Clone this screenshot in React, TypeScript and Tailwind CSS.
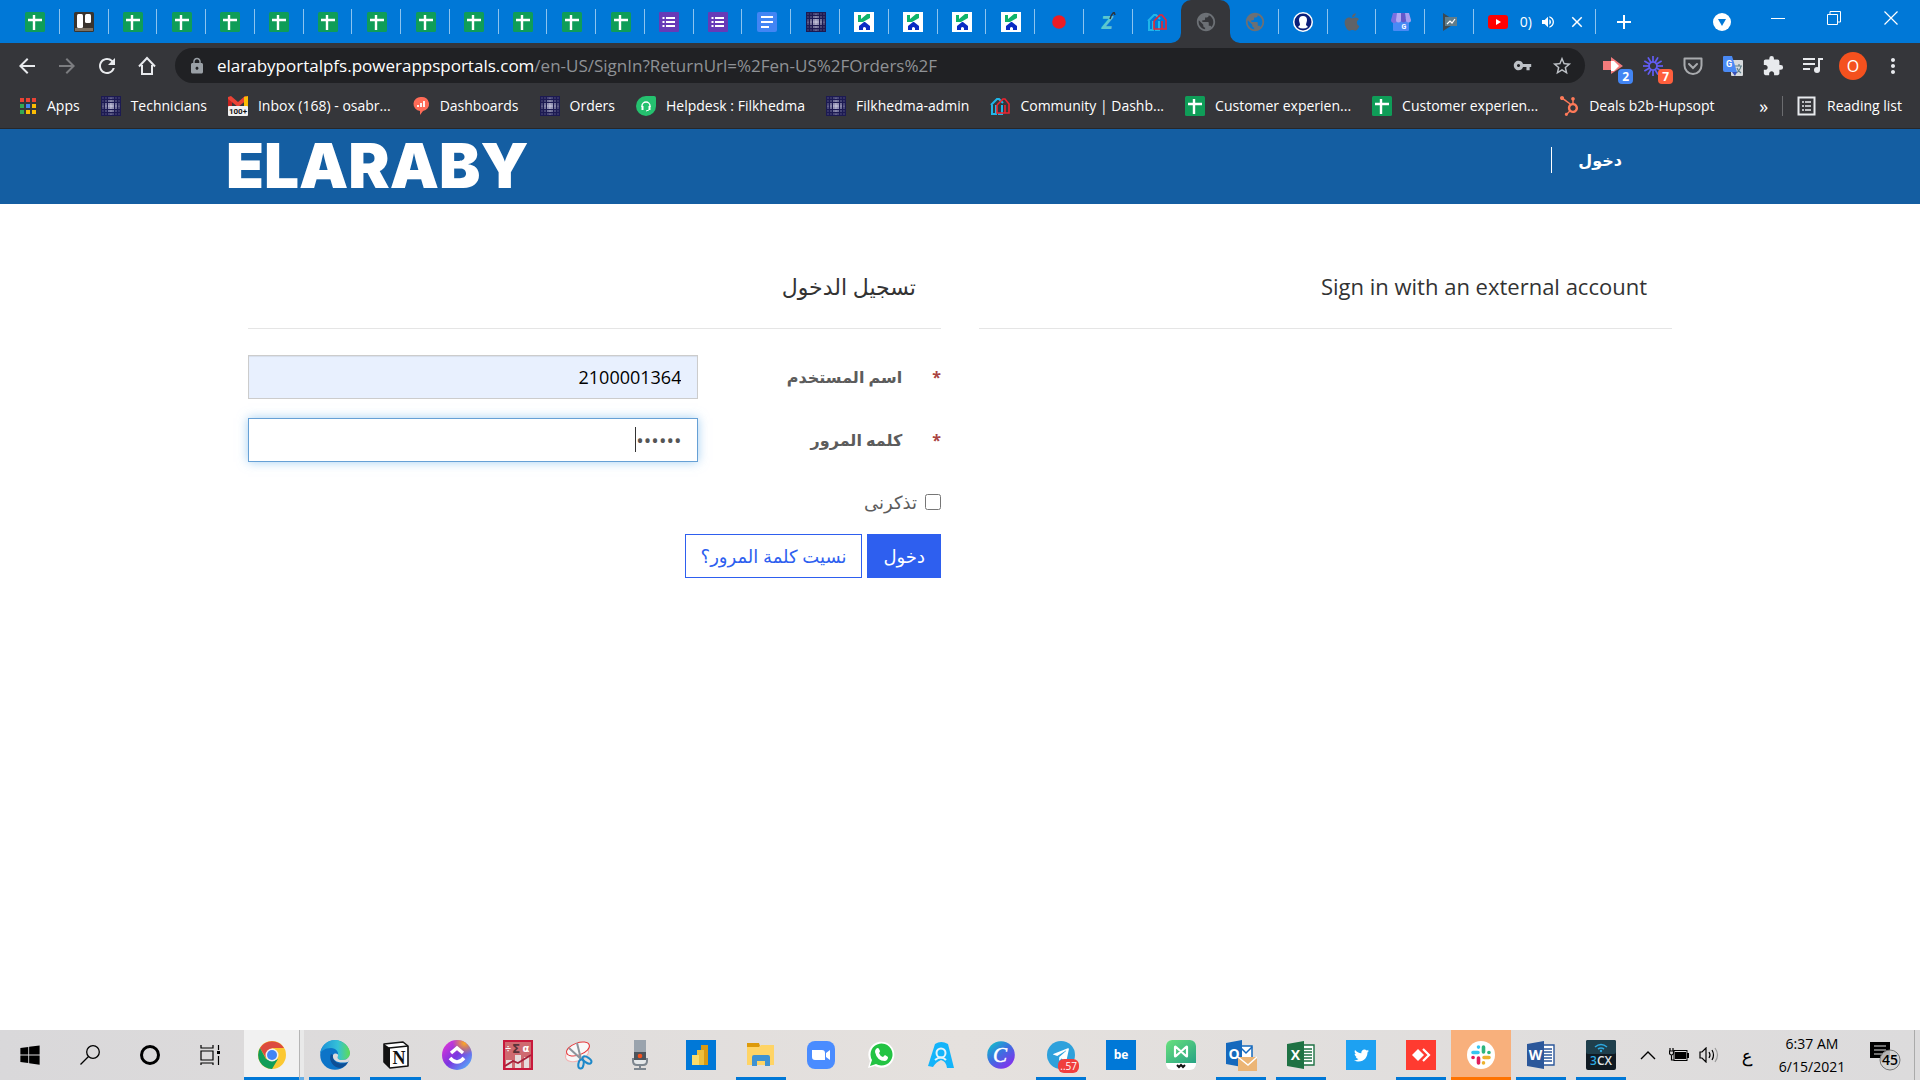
import type { ReactNode } from "react";
import { FaApple, FaHubspot, FaTelegramPlane, FaTwitter, FaWindows } from "react-icons/fa";
import {
  MdAdd,
  MdArrowBack,
  MdArrowForward,
  MdClose,
  MdExtension,
  MdLock,
  MdMoreVert,
  MdPublic,
  MdRefresh,
  MdStarBorder,
  MdVolumeUp,
  MdVpnKey,
} from "react-icons/md";

/* ---------- 20px favicons ---------- */

function SheetsIcon() {
  return (
    <svg viewBox="0 0 20 20" className="size-5">
      <rect width="20" height="20" rx="1.5" fill="#0f9d58" />
      <path d="M9 3v15M3 8h14" stroke="#fff" strokeWidth="2.4" />
    </svg>
  );
}

function BoardIcon() {
  return (
    <svg viewBox="0 0 20 20" className="size-5">
      <rect width="20" height="20" rx="1.5" fill="#3a342e" />
      <path d="M1 16h18v3H1z" fill="#7b7163" />
      <rect x="3" y="2" width="6" height="14" rx="1.5" fill="#fff" />
      <rect x="11" y="2" width="6" height="9" rx="1.5" fill="#fff" />
    </svg>
  );
}

function FormsIcon() {
  return (
    <svg viewBox="0 0 20 20" className="size-5">
      <rect width="20" height="20" rx="1" fill="#673ab7" />
      <path d="M7 6h9M7 10h9M7 14h9" stroke="#fff" strokeWidth="2" />
      <path d="M3.5 6h2M3.5 10h2M3.5 14h2" stroke="#fff" strokeWidth="2" />
    </svg>
  );
}

function DocsIcon() {
  return (
    <svg viewBox="0 0 20 20" className="size-5">
      <rect width="20" height="20" rx="2" fill="#4285f4" />
      <path d="M4 5h12M4 10h12M4 15h8" stroke="#fff" strokeWidth="2" />
    </svg>
  );
}

const dots = [-8, -5, -2, 0, 2, 5, 8];

function GridDotsIcon() {
  return (
    <svg viewBox="-10 -10 20 20" className="size-5">
      <rect x="-10" y="-10" width="20" height="20" fill="#1c1a52" />
      {dots.map((x) =>
        dots.map((y) => {
          const far = Math.abs(x) + Math.abs(y);
          return (
            <circle
              key={`${x},${y}`}
              cx={x}
              cy={y}
              r={Math.max(0.7, 1.1 - far * 0.03)}
              fill="#e4e3f4"
              opacity={Math.max(0.35, 1 - far * 0.05)}
            />
          );
        })
      )}
    </svg>
  );
}

function KhedmaIcon() {
  return (
    <svg viewBox="0 0 20 20" className="size-5">
      <rect width="20" height="20" fill="#fff" />
      <path d="M4 3h3v4l6-5h3v4l-7 4H4z" fill="#0fb36b" />
      <path d="M5 18v-4l5-4h1l5 4v4h-4v-2q-2-2-3 0v2z" fill="#0a2bc4" />
    </svg>
  );
}

function RecordIcon() {
  return (
    <svg viewBox="0 0 20 20" className="size-5">
      <circle cx="10" cy="10" r="6.8" fill="#ec1c24" />
    </svg>
  );
}

function TealTagIcon() {
  return (
    <svg viewBox="0 0 20 20" className="size-5">
      <text x="9" y="17" textAnchor="middle" fontSize="17" fontWeight="900" fontStyle="italic" fontFamily="Inter, sans-serif" fill="#5cc6cf">
        Z
      </text>
      <path d="M12 7q1-4 4-7l1 3" stroke="#2b3440" strokeWidth="1.5" fill="none" />
    </svg>
  );
}

function HousesIcon() {
  return (
    <svg viewBox="0 0 20 20" className="size-5" fill="none" strokeWidth="2">
      <path d="M1 9l6-6h2l4 4M2 9v9h4V9M12 9v9H8" stroke="#1fb6ea" />
      <path d="M7 9l6-6h2l4 5v9h-2M7 9v8h12M15 9v8" stroke="#ee2430" strokeWidth="1.6" />
    </svg>
  );
}

function GlobeIcon() {
  return <MdPublic className="size-[22px] text-[#6c7075]" />;
}

function PersonIcon() {
  return (
    <svg viewBox="0 0 20 20" className="size-5">
      <circle cx="10" cy="10" r="10" fill="#fff" />
      <circle cx="10" cy="10" r="8.5" fill="#0b1f7a" />
      <path d="M6 8a4 4 0 018 0c0 2-1 3-1 5l2 2q-5 3-10 0l2-2c0-2-1-3-1-5z" fill="#fff" />
    </svg>
  );
}

function StoreIcon() {
  return (
    <svg viewBox="0 0 20 20" className="size-5">
      <rect x="2" y="6" width="16" height="13" rx="1" fill="#4989f5" />
      <path d="M2 1h4v7a3 3 0 01-6 0z" fill="#7a6fe0" />
      <path d="M6 1h4v7a2 2 0 01-5 0z" fill="#b3a8f2" />
      <path d="M10 1h4l1 7a2 2 0 01-5 0z" fill="#6358c9" />
      <path d="M14 1h4l2 7a2 2 0 01-5 0z" fill="#a79df0" />
      <text x="13" y="17" textAnchor="middle" fontSize="7" fontWeight="700" fontFamily="Roboto, sans-serif" fill="#fff">
        G
      </text>
    </svg>
  );
}

function PlayConsoleIcon() {
  return (
    <svg viewBox="0 0 20 20" className="size-5">
      <path d="M3 1l14 9-14 9z" fill="#3d4a52" />
      <path d="M5 5h12v9H5z" fill="#607d8b" />
      <path d="M7 12l3-3 2 2 3-4" stroke="#fff" strokeWidth="1.2" fill="none" />
    </svg>
  );
}

function YoutubeIcon() {
  return (
    <svg viewBox="0 0 20 20" className="size-5">
      <rect y="3" width="20" height="14" rx="3" fill="#f00" />
      <path d="M8 7l5 3-5 3z" fill="#fff" />
    </svg>
  );
}

function AppsIcon() {
  const colors = ["#ea4335", "#ea4335", "#ea4335", "#34a853", "#4285f4", "#fbbc04", "#34a853", "#fbbc04", "#fbbc04"];
  return (
    <svg viewBox="0 0 18 18" className="size-[18px]">
      {colors.map((c, i) => (
        <rect key={i} x={1 + (i % 3) * 6} y={1 + Math.floor(i / 3) * 6} width="4" height="4" fill={c} />
      ))}
    </svg>
  );
}

function GmailIcon() {
  return (
    <svg viewBox="0 0 20 20" className="size-5">
      <path d="M0 2h4v9H0z" fill="#c5221f" />
      <path d="M16 2h4v9h-4z" fill="#fbbc04" />
      <path d="M0 1l3-1 7 6 7-6 3 1v2l-10 8L0 3z" fill="#ea4335" />
      <path d="M16 1l4-1v4l-4 3z" fill="#fbbc04" />
      <rect y="10" width="20" height="10" rx="1" fill="#f1f1f1" />
      <text x="10" y="18" textAnchor="middle" fontSize="8" fontWeight="700" fontFamily="Roboto, sans-serif" fill="#111">
        100+
      </text>
    </svg>
  );
}

function DashIcon() {
  return (
    <svg viewBox="0 0 18 20" className="h-5 w-[18px]">
      <path d="M9 1a7 7 0 012 14l-3 4v-4A7 7 0 019 1z" fill="#ff6b57" />
      <path d="M6 11V9M9 11V7M12 11V5" stroke="#fff" strokeWidth="1.8" />
    </svg>
  );
}

function HelpdeskIcon() {
  return (
    <svg viewBox="0 0 20 20" className="size-5">
      <path d="M10 0h8a2 2 0 012 2v8A10 10 0 1110 0z" fill="#25c16f" />
      <path d="M6 11v-1a4 4 0 018 0v1" stroke="#fff" strokeWidth="1.4" fill="none" />
      <path d="M6.5 10v4M13.5 10v4" stroke="#fff" strokeWidth="2" />
      <path d="M13 14l-3 1" stroke="#fff" />
    </svg>
  );
}

function ReadingListIcon() {
  return (
    <svg viewBox="0 0 20 20" className="size-5" stroke="#e8eaed" fill="none">
      <rect x="1.5" y="1.5" width="16" height="17" strokeWidth="2" />
      <path d="M8 6h6M8 10h6M8 14h6M5 6h2M5 10h2M5 14h2" strokeWidth="1.6" />
    </svg>
  );
}

/* ---------- browser chrome ---------- */

type Tab = { title: string; icon: ReactNode; active?: boolean };

const sheet = (title: string): Tab => ({ title, icon: <SheetsIcon /> });

const tabs: Tab[] = [
  sheet("Sheet 1"),
  { title: "Board", icon: <BoardIcon /> },
  ...Array.from({ length: 11 }, (_, i) => sheet(`Sheet ${i + 2}`)),
  { title: "Form 1", icon: <FormsIcon /> },
  { title: "Form 2", icon: <FormsIcon /> },
  { title: "Document", icon: <DocsIcon /> },
  { title: "Orders", icon: <GridDotsIcon /> },
  ...Array.from({ length: 4 }, (_, i) => ({ title: `Filkhedma ${i + 1}`, icon: <KhedmaIcon /> })),
  { title: "Recording", icon: <RecordIcon /> },
  { title: "Zoho", icon: <TealTagIcon /> },
  { title: "Community", icon: <HousesIcon /> },
  { title: "Sign in", icon: <GlobeIcon />, active: true },
  { title: "Portal", icon: <GlobeIcon /> },
  { title: "Account", icon: <PersonIcon /> },
  { title: "Apple", icon: <FaApple className="size-5 text-[#5f6368]" /> },
  { title: "Business", icon: <StoreIcon /> },
  { title: "Play Console", icon: <PlayConsoleIcon /> },
];

function TabStrip() {
  return (
    <div className="flex h-[43px] bg-[#0078d7] pl-[11px] text-white">
      <div className="flex min-w-0 flex-1">
        {tabs.map((tab, i) => (
          <button
            key={tab.title}
            aria-label={tab.title}
            className={`relative flex min-w-0 flex-1 items-center justify-center ${
              tab.active ? "rounded-t-[10px] bg-[#35363a]" : ""
            }`}
          >
            {tab.icon}
            {tab.active && (
              <>
                <svg viewBox="0 0 10 10" className="absolute bottom-0 -left-[10px] size-[10px]">
                  <path d="M10 0v10H0A10 10 0 0010 0z" fill="#35363a" />
                </svg>
                <svg viewBox="0 0 10 10" className="absolute -right-[10px] bottom-0 size-[10px]">
                  <path d="M0 0v10h10A10 10 0 010 0z" fill="#35363a" />
                </svg>
              </>
            )}
            {!tab.active && !tabs[i + 1]?.active && (
              <span className="absolute top-[9px] right-0 h-[25px] w-px bg-[#8cc4ef]" />
            )}
          </button>
        ))}
      </div>
      <div className="flex w-[122px] items-center pl-[14px]">
        <YoutubeIcon />
        <span className="ml-1 w-5 text-right text-sm">0)</span>
        <MdVolumeUp className="ml-2 size-4" />
        <button aria-label="Close tab" className="ml-3">
          <MdClose className="size-[18px]" />
        </button>
        <span className="ml-auto h-[25px] w-px bg-[#8cc4ef]" />
      </div>
      <button aria-label="New tab" className="flex w-14 items-center justify-center">
        <MdAdd className="size-6" />
      </button>
      <div className="flex w-[268px] items-start justify-end">
        <button aria-label="Tab search" className="mr-1 flex h-11 w-12 items-center justify-center">
          <svg viewBox="0 0 18 18" className="size-[18px]">
            <circle cx="9" cy="9" r="9" fill="#fff" />
            <path d="M5 6h8l-4 7z" fill="#0078d7" />
          </svg>
        </button>
        <button aria-label="Minimize" className="flex h-9 w-14 items-center justify-center">
          <svg viewBox="0 0 14 14" className="size-[14px]" stroke="#fff">
            <path d="M0 7.5h14" />
          </svg>
        </button>
        <button aria-label="Restore" className="flex h-9 w-14 items-center justify-center">
          <svg viewBox="0 0 14 14" className="size-[14px]" stroke="#fff" fill="none">
            <path d="M.5 3.5h10v10H.5zM3 3V.5h10.5V11H11" />
          </svg>
        </button>
        <button aria-label="Close" className="flex h-9 w-[58px] items-center justify-center">
          <svg viewBox="0 0 14 14" className="size-[14px]" stroke="#fff">
            <path d="M.5.5l13 13M13.5.5l-13 13" strokeWidth="1.2" />
          </svg>
        </button>
      </div>
    </div>
  );
}

function ToolButton({ label, children }: { label: string; children: ReactNode }) {
  return (
    <button aria-label={label} className="relative flex h-9 w-10 items-center justify-center">
      {children}
    </button>
  );
}

function Toolbar() {
  return (
    <div className="flex h-[45px] items-center bg-[#35363a] px-[7px] text-[#e8eaed]">
      <ToolButton label="Back">
        <MdArrowBack className="size-6" />
      </ToolButton>
      <ToolButton label="Forward">
        <MdArrowForward className="size-6 text-[#7c7d80]" />
      </ToolButton>
      <ToolButton label="Reload">
        <MdRefresh className="size-6" />
      </ToolButton>
      <ToolButton label="Home">
        <svg viewBox="0 0 20 20" className="size-5" fill="none" stroke="currentColor" strokeWidth="2">
          <path d="M5 9v9h10V9M2 10.5L10 2l8 8.5" />
        </svg>
      </ToolButton>
      <div className="mx-2 flex h-[35px] min-w-0 flex-1 items-center rounded-full bg-[#202124] pr-[3px] pl-[13px]">
        <MdLock className="size-[18px] text-[#9aa0a6]" />
        <span className="ml-[11px] flex-1 truncate text-[17px] text-[#8f9296]">
          <span className="text-white">elarabyportalpfs.powerappsportals.com</span>
          /en-US/SignIn?ReturnUrl=%2Fen-US%2FOrders%2F
        </span>
        <ToolButton label="Passwords">
          <MdVpnKey className="size-[19px] text-[#bdc1c6]" />
        </ToolButton>
        <ToolButton label="Bookmark">
          <MdStarBorder className="size-[22px] text-[#bdc1c6]" />
        </ToolButton>
      </div>
      <ToolButton label="Recorder">
        <svg viewBox="0 0 20 20" className="size-5">
          <path d="M0 5h8V1l12 9-12 8v-4H0z" fill="#f47c7c" />
          <path d="M8 5h3l5 5-5 5H8z" fill="#fff" />
        </svg>
        <span className="absolute right-0 bottom-0 rounded-sm bg-[#4285f4] px-1 text-xs leading-[15px] font-bold text-white">
          2
        </span>
      </ToolButton>
      <ToolButton label="Loom">
        <svg viewBox="-10 -10 20 20" className="size-5" stroke="#625df5" strokeWidth="1.7">
          {Array.from({ length: 12 }, (_, i) => (
            <path key={i} d="M0-4V-10" transform={`rotate(${i * 30})`} />
          ))}
          <circle r="4" fill="none" />
        </svg>
        <span className="absolute right-0 bottom-0 rounded-sm bg-[#ff5f3d] px-1 text-xs leading-[15px] font-bold text-white">
          7
        </span>
      </ToolButton>
      <ToolButton label="Pocket">
        <svg viewBox="0 0 20 20" className="size-5" fill="none" stroke="#a9abae" strokeWidth="2">
          <path d="M1.5 2.5h17v7a8.5 8.5 0 01-17 0z" strokeLinejoin="round" />
          <path d="M6 8l4 4 4-4" strokeLinecap="round" />
        </svg>
      </ToolButton>
      <ToolButton label="Translate">
        <svg viewBox="0 0 20 20" className="size-5">
          <rect x="8" y="4" width="12" height="16" rx="1" fill="#d7dadd" />
          <path d="M12 10h7M16 8v2M18 10q-1 5-5 7M14 12q1 3 4 5" stroke="#5f7f8a" strokeWidth="1.2" fill="none" />
          <path d="M9 16h5l-2 4z" fill="#3a4fb5" />
          <path d="M1 0h8l5 16H2a2 2 0 01-2-2V1a1 1 0 011-1z" fill="#4a8af4" />
          <text x="6" y="11" textAnchor="middle" fontSize="9" fontWeight="700" fontFamily="Roboto, sans-serif" fill="#fff">
            G
          </text>
        </svg>
      </ToolButton>
      <ToolButton label="Extensions">
        <MdExtension className="size-[22px]" />
      </ToolButton>
      <ToolButton label="Media">
        <svg viewBox="0 0 20 20" className="size-5" fill="none" stroke="currentColor" strokeWidth="2">
          <path d="M0 3h12M0 8h12M0 13h7" />
          <path d="M16 14V3h4" />
          <circle cx="14" cy="14" r="3" fill="currentColor" stroke="none" />
        </svg>
      </ToolButton>
      <ToolButton label="Profile">
        <span className="flex size-7 items-center justify-center rounded-full bg-[#f4511e] text-base text-white">O</span>
      </ToolButton>
      <ToolButton label="Menu">
        <MdMoreVert className="size-6" />
      </ToolButton>
    </div>
  );
}

const bookmarks: Array<{ label: string; icon: ReactNode }> = [
  { label: "Apps", icon: <AppsIcon /> },
  { label: "Technicians", icon: <GridDotsIcon /> },
  { label: "Inbox (168) - osabr...", icon: <GmailIcon /> },
  { label: "Dashboards", icon: <DashIcon /> },
  { label: "Orders", icon: <GridDotsIcon /> },
  { label: "Helpdesk : Filkhedma", icon: <HelpdeskIcon /> },
  { label: "Filkhedma-admin", icon: <GridDotsIcon /> },
  { label: "Community | Dashb...", icon: <HousesIcon /> },
  { label: "Customer experien...", icon: <SheetsIcon /> },
  { label: "Customer experien...", icon: <SheetsIcon /> },
  { label: "Deals b2b-Hupsopt", icon: <FaHubspot className="size-5 text-[#ff7a59]" /> },
];

function BookmarksBar() {
  return (
    <div className="flex h-[41px] items-center border-b border-[#26272a] bg-[#35363a] pr-[18px] pb-1 pl-[19px] text-sm text-white">
      <div className="flex min-w-0 flex-1 gap-[21px]">
        {bookmarks.map((b, i) => (
          <a key={i} href="#" className="flex items-center gap-[10px] whitespace-nowrap">
            {b.icon}
            {b.label}
          </a>
        ))}
      </div>
      <button aria-label="More bookmarks" className="text-lg leading-none">
        »
      </button>
      <span className="mx-[14px] h-5 w-px bg-[#6b6c6f]" />
      <button className="flex items-center gap-[10px] whitespace-nowrap">
        <ReadingListIcon />
        Reading list
      </button>
    </div>
  );
}

/* ---------- portal page ---------- */

function PortalHeader() {
  return (
    <header className="bg-[#145ea2]">
      <div className="mx-auto flex h-[75px] max-w-[1468px] items-start justify-between text-white">
        <a href="#" className="mt-[5px] font-[Inter,sans-serif] text-[62px] leading-[64px] font-black">
          ELARABY
        </a>
        <nav className="mt-[18px] mr-[72px] flex h-[26px] items-center border-l border-white pl-[26px]">
          <a href="#" lang="ar" dir="rtl" className="text-base font-bold">
            دخول
          </a>
        </nav>
      </div>
    </header>
  );
}

function SignInForm() {
  return (
    <form className="text-lg text-[#5c5c5c]" onSubmit={(e) => e.preventDefault()}>
      <h2 className="flex h-[73px] items-center border-b border-[#e5e5e5] pr-[25px] pb-3 text-[22px] text-[#333]">
        تسجيل الدخول
      </h2>
      <div className="mt-[26px] flex items-center">
        <label htmlFor="username" className="flex w-[35%] gap-[30px] text-base font-bold">
          <span className="text-[#a94442]">*</span>
          اسم المستخدم
        </label>
        <input
          id="username"
          type="text"
          defaultValue="2100001364"
          className="h-11 min-w-0 flex-1 border border-[#ccc] bg-[#e8f0fe] px-4 text-black shadow-[inset_0_1px_1px_rgba(0,0,0,0.075)] outline-none"
        />
      </div>
      <div className="mt-[19px] flex items-center">
        <label htmlFor="password" className="flex w-[35%] gap-[30px] text-base font-bold">
          <span className="text-[#a94442]">*</span>
          كلمه المرور
        </label>
        <div className="relative flex min-w-0 flex-1">
          <input
            id="password"
            type="password"
            defaultValue="210000"
            className="h-11 w-full border border-[#66a0d5] bg-white px-4 text-xl text-[#555] shadow-[0_0_10px_rgba(102,175,233,0.6)] outline-none"
          />
          <span className="absolute top-[9px] right-[62px] h-[25px] w-px bg-[#333]" />
        </div>
      </div>
      <label className="mt-6 flex h-8 items-center gap-2">
        <input type="checkbox" className="size-4" />
        تذكرنى
      </label>
      <div className="mt-4 flex gap-[5px]">
        <button className="h-11 border border-[#2e5fef] bg-[#2e5fef] px-[15px] text-white">دخول</button>
        <button type="button" className="h-11 border border-[#2e5fef] px-[15px] text-[#2e5fef]">
          نسيت كلمة المرور؟
        </button>
      </div>
    </form>
  );
}

/* ---------- taskbar ---------- */

function ChromeIcon() {
  return (
    <svg viewBox="0 0 28 28" className="size-7">
      <circle cx="14" cy="14" r="14" fill="#fbc832" />
      <path d="M14 7h12A14 14 0 002 7l6 10z" fill="#dd4b3e" />
      <path d="M2 7a14 14 0 0012 21l6-10-6 2-6-2z" fill="#109d58" />
      <circle cx="14" cy="14" r="6.5" fill="#f1f1f1" />
      <circle cx="14" cy="14" r="5" fill="#4285f4" />
    </svg>
  );
}

function EdgeIcon() {
  return (
    <svg viewBox="0 0 30 30" className="size-[30px]">
      <defs>
        <linearGradient id="edgeTop" x1="0" x2="1">
          <stop offset="0" stopColor="#1a8fd8" />
          <stop offset=".6" stopColor="#35c1d8" />
          <stop offset="1" stopColor="#5fdc54" />
        </linearGradient>
      </defs>
      <circle cx="15" cy="15" r="14.8" fill="#0c74c8" />
      <path d="M0 14C1 6 7 0 15 0s15 7 15 13c0 5-4 7-8 7-4 0-5-2-4-4 1-4-2-8-7-8C5 8 1 11 0 14z" fill="url(#edgeTop)" />
      <path d="M11 14c-3 6 2 14 10 14 3-1 6-3 7-6-8 4-16 0-15-7z" fill="#0f4f95" />
      <path d="M13 15c-1 6 6 9 15 7l2-3v-5c-1 5-5 6-8 6-4 0-5-2-4-4 1-2-3-4-5-1z" fill="#dcdbdc" />
    </svg>
  );
}

function NotionIcon() {
  return (
    <svg viewBox="0 0 28 28" className="size-7">
      <path d="M2 3l19-2 5 4v20L8 27l-6-6z" fill="#fff" stroke="#111" strokeWidth="1.6" strokeLinejoin="round" />
      <path d="M2 3l6 4v20l-6-6z" fill="#111" />
      <path d="M7 7l19-2" stroke="#111" strokeWidth="1.6" />
      <text x="17" y="23" textAnchor="middle" fontSize="18" fontWeight="700" fontFamily="Liberation Serif, serif" fill="#111">
        N
      </text>
    </svg>
  );
}

function ClickUpIcon() {
  return (
    <svg viewBox="0 0 30 30" className="size-[30px]">
      <defs>
        <linearGradient id="clickup" x1="0" y1="0" x2="1" y2="1">
          <stop offset="0" stopColor="#f036d6" />
          <stop offset=".5" stopColor="#7b35e0" />
          <stop offset="1" stopColor="#4cc9ff" />
        </linearGradient>
        <radialGradient id="clickupGlow" cx=".75" cy=".1" r=".4">
          <stop offset="0" stopColor="#ffab1f" />
          <stop offset="1" stopColor="#ffab1f" stopOpacity="0" />
        </radialGradient>
      </defs>
      <circle cx="15" cy="15" r="15" fill="url(#clickup)" />
      <circle cx="15" cy="15" r="15" fill="url(#clickupGlow)" />
      <path d="M9 13l6-5 6 5" stroke="#fff" strokeWidth="3.5" fill="none" />
      <path d="M8 18q7 8 14 0" stroke="#fff" strokeWidth="3.5" fill="none" />
    </svg>
  );
}

function StatsIcon() {
  return (
    <svg viewBox="0 0 30 30" className="size-[30px]">
      <rect x="1" y="1" width="28" height="28" fill="#cf6a70" stroke="#c8193c" strokeWidth="2" />
      <path d="M3 20h6v8H3zM12 15h6v13h-6zM21 17h5v11h-5z" fill="#e6dcdc" />
      <path d="M2 26l8-5 5 2 13-8" stroke="#a5203a" strokeWidth="1.8" fill="none" />
      <g fontFamily="DejaVu Sans, sans-serif" fontWeight="700" textAnchor="middle">
        <text x="5" y="12" fontSize="8" fill="#fff">
          ÷
        </text>
        <text x="13" y="13" fontSize="12" fill="#5a3338">
          Σ
        </text>
        <text x="23" y="12" fontSize="10" fill="#fff">
          α
        </text>
      </g>
    </svg>
  );
}

function SnipIcon() {
  return (
    <svg viewBox="0 0 30 30" className="size-[30px]">
      <ellipse cx="13" cy="14" rx="12" ry="7" transform="rotate(-20 13 14)" fill="#f6f6f6" stroke="#f3b1b1" />
      <ellipse cx="14" cy="9" rx="12" ry="6" transform="rotate(-20 14 9)" fill="#f8f8f8" stroke="#e5383b" />
      <path d="M5 8l12 11M13 3l4 16" stroke="#8d949c" strokeWidth="2" />
      <ellipse cx="17" cy="24" rx="2.6" ry="4.5" transform="rotate(10 17 24)" fill="none" stroke="#1d88c9" strokeWidth="2" />
      <ellipse cx="23" cy="20" rx="2.6" ry="5" transform="rotate(-55 23 20)" fill="none" stroke="#1d88c9" strokeWidth="2" />
    </svg>
  );
}

function MicIcon() {
  return (
    <svg viewBox="0 0 30 30" className="size-[30px]">
      <path d="M9 0h12v12H9z" fill="#9aa3ad" />
      <path d="M9 12h12v8H9z" fill="#4c535b" />
      <circle cx="15" cy="16" r="2.3" fill="#f4511e" />
      <path d="M9 20h12v1a3 3 0 01-3 3h-6a3 3 0 01-3-3z" fill="#e5e8ea" />
      <path d="M8 18v3q0 4 4 4h6q4 0 4-4v-3M15 25v4M9 29h12" stroke="#7d868f" strokeWidth="2" fill="none" />
    </svg>
  );
}

function PowerBiIcon() {
  return (
    <svg viewBox="0 0 30 30" className="size-[30px]">
      <rect width="30" height="30" fill="#0078d7" />
      <path d="M15 5h7v20h-7z" fill="#d99a12" />
      <path d="M11 10h7v15h-7z" fill="#edbf3c" />
      <path d="M6 15h7v10H6z" fill="#f9dc6b" />
    </svg>
  );
}

function FolderIcon() {
  return (
    <svg viewBox="0 0 30 30" className="size-[30px]">
      <path d="M1 3h12l1 3-1 2H1z" fill="#dd9a0a" />
      <path d="M1 7h12l2-2h13v20H1z" fill="#ffd465" />
      <path d="M6 26V17q0-2 2-2h14q2 0 2 2v9h-5v-5h-8v5z" fill="#3f92d2" />
    </svg>
  );
}

function ZoomIcon() {
  return (
    <svg viewBox="0 0 28 28" className="size-7">
      <rect width="28" height="28" rx="8" fill="#4a8cff" />
      <path d="M5 9h10a3 3 0 013 3v7H8a3 3 0 01-3-3zM19 12l4-3v10l-4-3z" fill="#fff" />
    </svg>
  );
}

function WhatsAppIcon() {
  return (
    <svg viewBox="0 0 28 28" className="size-7">
      <path d="M1 27l2-7a13 13 0 115 5z" fill="#fff" />
      <path d="M3 25l2-6a11 11 0 114 4z" fill="#23c343" />
      <path d="M9 8q2-2 3 0l1 2q0 1-1 2 1 3 4 4l2-2 3 2q0 3-3 4-8 0-10-9 0-2 1-3z" fill="#fff" />
    </svg>
  );
}

function AssistantIcon() {
  return (
    <svg viewBox="0 0 28 28" className="size-7">
      <path d="M8 3q6-4 13 0l6 24h-7q-1-7-6-8-5 2-8 7l-5-1z" fill="#14b4fa" />
      <circle cx="14" cy="12" r="4.5" fill="none" stroke="#e4f3fa" strokeWidth="2" />
      <path d="M8 19q6-5 11 0" fill="none" stroke="#e4f3fa" strokeWidth="2" />
    </svg>
  );
}

function CanvaIcon() {
  return (
    <svg viewBox="0 0 28 28" className="size-7">
      <defs>
        <linearGradient id="canva" x1="0" y1="0" x2=".8" y2="1">
          <stop offset="0" stopColor="#06cfc6" />
          <stop offset=".5" stopColor="#3d6fe0" />
          <stop offset="1" stopColor="#8a2bef" />
        </linearGradient>
      </defs>
      <circle cx="14" cy="14" r="13.8" fill="url(#canva)" />
      <text x="13" y="21" textAnchor="middle" fontSize="21" fontStyle="italic" fontFamily="Liberation Serif, serif" fill="#fff" stroke="#fff" strokeWidth=".5">
        C
      </text>
    </svg>
  );
}

function TelegramIcon() {
  return (
    <span className="relative flex size-7 items-center justify-center rounded-full bg-[#2ea1dc]">
      <FaTelegramPlane className="size-[18px] text-white" />
      <span className="absolute -right-1 -bottom-1 rounded-md bg-[#f03e3e] px-[2px] text-[10px] leading-[14px] text-white">
        ..57
      </span>
    </span>
  );
}

function BeIcon() {
  return (
    <span className="flex size-[30px] items-center justify-center bg-[#0078d7] text-xs font-bold text-white">be</span>
  );
}

function MindMapIcon() {
  return (
    <svg viewBox="0 0 30 30" className="size-[30px]">
      <defs>
        <linearGradient id="mind" x1="0" y1="0" x2="1" y2="1">
          <stop offset="0" stopColor="#69e07d" />
          <stop offset="1" stopColor="#27a384" />
        </linearGradient>
      </defs>
      <rect width="30" height="30" rx="6" fill="#fff" />
      <path d="M0 23V6a6 6 0 016-6h18a6 6 0 016 6v17z" fill="url(#mind)" />
      <path d="M9 16V7q0-1 1 0l10 9q1 1 1 0V7q0-1-1 0l-10 9q-1 1-1 0z" stroke="#fff" strokeWidth="2.2" fill="none" />
      <path d="M11 25l2 2 2-2 2 2 2-2" stroke="#111" strokeWidth="2" fill="none" />
    </svg>
  );
}

function OutlookIcon() {
  return (
    <svg viewBox="0 0 32 32" className="size-8">
      <path d="M15 7h12v12H15z" fill="#fff" stroke="#1569bd" strokeWidth="1.5" />
      <path d="M15 8l6 6 6-6" stroke="#1569bd" strokeWidth="1.5" fill="none" />
      <path d="M1 4l16-3v27L1 25z" fill="#1569bd" />
      <text x="9" y="20" textAnchor="middle" fontSize="14" fontWeight="700" fontFamily="Open Sans, sans-serif" fill="#fff">
        O
      </text>
      <path d="M13 18h19v14H13z" fill="#ecb575" />
      <path d="M13 18l10 8 9-8" stroke="#fff" strokeWidth="1.4" fill="none" />
    </svg>
  );
}

function OfficeIcon({ color, letter }: { color: string; letter: string }) {
  return (
    <svg viewBox="0 0 28 28" className="size-7">
      <path d="M15 4h12v20H15z" fill="#fff" stroke={color} strokeWidth="1.4" />
      <path d="M17 8h8M17 11h8M17 14h8M17 17h8M17 20h8" stroke={color} strokeWidth="1.4" />
      <path d="M0 3l17-3v28L0 25z" fill={color} />
      <text x="8.5" y="19" textAnchor="middle" fontSize="14" fontWeight="700" fontFamily="Open Sans, sans-serif" fill="#fff">
        {letter}
      </text>
    </svg>
  );
}

function TwitterIcon() {
  return (
    <span className="flex size-[30px] items-center justify-center bg-[#1da1f2]">
      <FaTwitter className="size-[15px] text-white" />
    </span>
  );
}

function AnyDeskIcon() {
  return (
    <svg viewBox="0 0 30 30" className="size-[30px]">
      <rect width="30" height="30" fill="#ff3b30" />
      <path d="M12 9l6 6-6 6-6-6z" fill="#fff" />
      <path d="M17 9l6 6-6 6" stroke="#fff" strokeWidth="2.2" fill="none" />
    </svg>
  );
}

function SlackIcon() {
  return (
    <svg viewBox="0 0 28 28" className="size-7">
      <circle cx="14" cy="14" r="14" fill="#fff" />
      <g strokeWidth="3.6" strokeLinecap="round">
        <path d="M6 11.5h5M11.5 6v.1" stroke="#36c5f0" />
        <path d="M16.5 6v5M22 11.5h-.1" stroke="#2eb67d" />
        <path d="M17 16.5h5M16.5 22v-.1" stroke="#ecb22e" />
        <path d="M11.5 17v5M6 16.5h.1" stroke="#e01e5a" />
      </g>
    </svg>
  );
}

function ThreeCxIcon() {
  return (
    <svg viewBox="0 0 30 30" className="size-[30px]">
      <rect width="30" height="30" rx="2" fill="#101a22" />
      <rect width="30" height="14" rx="2" fill="#1f3f4c" />
      <path d="M9 7q6-5 12 0M12 9q3-2 6 0" stroke="#2da9e0" strokeWidth="1.6" fill="none" />
      <circle cx="15" cy="11" r="1.2" fill="#2da9e0" />
      <text x="15" y="25" textAnchor="middle" fontSize="12" fontWeight="600" fontFamily="Open Sans, sans-serif" fill="#dfe3e6">
        <tspan fill="#2da9e0">3</tspan>CX
      </text>
    </svg>
  );
}

type TaskApp = { name: string; icon: ReactNode; open?: boolean };

const pinned: TaskApp[] = [
  { name: "Edge", icon: <EdgeIcon />, open: true },
  { name: "Notion", icon: <NotionIcon />, open: true },
  { name: "ClickUp", icon: <ClickUpIcon /> },
  { name: "Statistics", icon: <StatsIcon /> },
  { name: "Snipping Tool", icon: <SnipIcon /> },
  { name: "Voice Recorder", icon: <MicIcon /> },
  { name: "Power BI", icon: <PowerBiIcon /> },
];

const apps: TaskApp[] = [
  { name: "File Explorer", icon: <FolderIcon />, open: true },
  { name: "Zoom", icon: <ZoomIcon /> },
  { name: "WhatsApp", icon: <WhatsAppIcon /> },
  { name: "Assistant", icon: <AssistantIcon /> },
  { name: "Canva", icon: <CanvaIcon /> },
  { name: "Telegram", icon: <TelegramIcon />, open: true },
  { name: "Behance", icon: <BeIcon /> },
  { name: "MindMaster", icon: <MindMapIcon /> },
  { name: "Outlook", icon: <OutlookIcon />, open: true },
  { name: "Excel", icon: <OfficeIcon color="#1f7244" letter="X" />, open: true },
  { name: "Twitter", icon: <TwitterIcon /> },
  { name: "AnyDesk", icon: <AnyDeskIcon />, open: true },
];

function TaskButton({ app, className = "w-[60px]" }: { app: TaskApp; className?: string }) {
  return (
    <button aria-label={app.name} className={`relative flex h-full items-center justify-center ${className}`}>
      {app.icon}
      {app.open && <span className="absolute inset-x-[5px] bottom-0 h-[3px] bg-[#0078d7]" />}
    </button>
  );
}

function Taskbar() {
  return (
    <footer className="flex h-[50px] items-stretch bg-linear-to-r from-[#d9d8da] via-[#e5e1de] to-[#dcdbdc] text-black">
      <TaskButton app={{ name: "Start", icon: <FaWindows className="size-[22px]" /> }} />
      <TaskButton
        app={{
          name: "Search",
          icon: (
            <svg viewBox="0 0 20 20" className="size-5" fill="none" stroke="#000" strokeWidth="1.3">
              <circle cx="13" cy="7" r="6.3" />
              <path d="M8.5 11.5l-8 8" />
            </svg>
          ),
        }}
      />
      <TaskButton
        app={{
          name: "Cortana",
          icon: <span className="size-5 rounded-full border-[3px] border-black" />,
        }}
      />
      <TaskButton
        app={{
          name: "Task View",
          icon: (
            <svg viewBox="0 0 20 20" className="size-5" fill="none" stroke="#000" strokeWidth="1.2">
              <path d="M1 6h12v9H1zM1 0v3h12V0M1 20v-2h12v2M18.5 0v5M18.5 11v9" />
              <path d="M17 6h3v3h-3z" fill="#000" stroke="none" />
            </svg>
          ),
        }}
      />
      <div className="ml-1 flex w-[60px]">
        <button
          aria-label="Chrome"
          className="flex w-[55px] items-center justify-center border-b-[3px] border-[#0078d7] bg-[#f1f1f1] pt-[3px]"
        >
          <ChromeIcon />
        </button>
        <span className="flex-1 border-b-[3px] border-l border-b-[#61ace6] border-l-[#b5b5b5] bg-[#e9e9e9]" />
      </div>
      {pinned.map((app) => (
        <TaskButton key={app.name} app={app} className="w-[61px]" />
      ))}
      {apps.map((app) => (
        <TaskButton key={app.name} app={app} />
      ))}
      <button
        aria-label="Slack"
        className="flex w-[60px] items-center justify-center border-b-[3px] border-[#ff7300] bg-[#f8b07c] pt-[3px]"
      >
        <SlackIcon />
      </button>
      <TaskButton app={{ name: "Word", icon: <OfficeIcon color="#2b579a" letter="W" />, open: true }} />
      <TaskButton app={{ name: "3CX", icon: <ThreeCxIcon />, open: true }} />

      <div className="ml-auto flex items-center">
        <button aria-label="Show hidden icons" className="flex w-8 justify-center">
          <svg viewBox="0 0 16 10" className="h-[10px] w-4" fill="none" stroke="#000" strokeWidth="1.4">
            <path d="M1 9l7-7 7 7" />
          </svg>
        </button>
        <button aria-label="Battery" className="flex w-[30px] justify-center">
          <svg viewBox="0 0 20 14" className="h-[14px] w-5">
            <rect x="5" y="2.5" width="13" height="10" fill="none" stroke="#000" />
            <path d="M6 4h11v7H6zM18 5h2v5h-2z" fill="#000" />
            <path d="M1 0v3M4 0v3M.5 3h4v2a2 2 0 01-4 0zM2.5 7v5H5" fill="none" stroke="#000" strokeWidth="1.2" />
          </svg>
        </button>
        <button aria-label="Volume" className="flex w-[30px] justify-center">
          <svg viewBox="0 0 20 16" className="h-4 w-5" fill="none" stroke="#000" strokeWidth="1.2">
            <path d="M1 5h2l4-4v14l-4-4H1z" />
            <path d="M10 5q2 3 0 6M13 3q3 5 0 10" />
            <path d="M16 1q5 7 0 14" stroke="#999" />
          </svg>
        </button>
        <button aria-label="Input language" className="w-[46px] text-center text-lg">
          ع
        </button>
        <div className="w-[84px] text-center text-sm leading-[23px] whitespace-nowrap">
          <div>6:37 AM</div>
          <div>6/15/2021</div>
        </div>
        <button aria-label="Notifications" className="flex w-[60px] justify-center pl-1">
          <svg viewBox="0 0 32 32" className="size-8">
            <path d="M0 3h20v16h-5l-4 4v-4H0z" fill="#000" />
            <path d="M4 7h12M4 11h12M4 15h8" stroke="#ddd" strokeWidth="1.2" />
            <circle cx="20" cy="21" r="10" fill="#d4d4d4" fillOpacity=".85" stroke="#777" />
            <text x="20" y="26" textAnchor="middle" fontSize="14" fontWeight="600" fontFamily="Open Sans, sans-serif">
              45
            </text>
          </svg>
        </button>
        <span className="mr-[5px] h-[50px] w-px bg-[#aaa]" />
      </div>
    </footer>
  );
}

export default function App() {
  return (
    <div className="flex min-h-screen flex-col bg-white font-['Open_Sans','DejaVu_Sans',sans-serif]">
      <TabStrip />
      <Toolbar />
      <BookmarksBar />
      <PortalHeader />
      <main className="mx-auto w-full max-w-[1462px] flex-1 px-[19px] pt-[52px]">
        <div dir="rtl" lang="ar" className="grid grid-cols-2 gap-x-[38px]">
          <section>
            <h2
              dir="ltr"
              lang="en"
              className="flex h-[73px] items-center justify-end border-b border-[#e5e5e5] pr-[25px] pb-3 text-[22px] text-[#333]"
            >
              Sign in with an external account
            </h2>
          </section>
          <SignInForm />
        </div>
      </main>
      <Taskbar />
    </div>
  );
}
